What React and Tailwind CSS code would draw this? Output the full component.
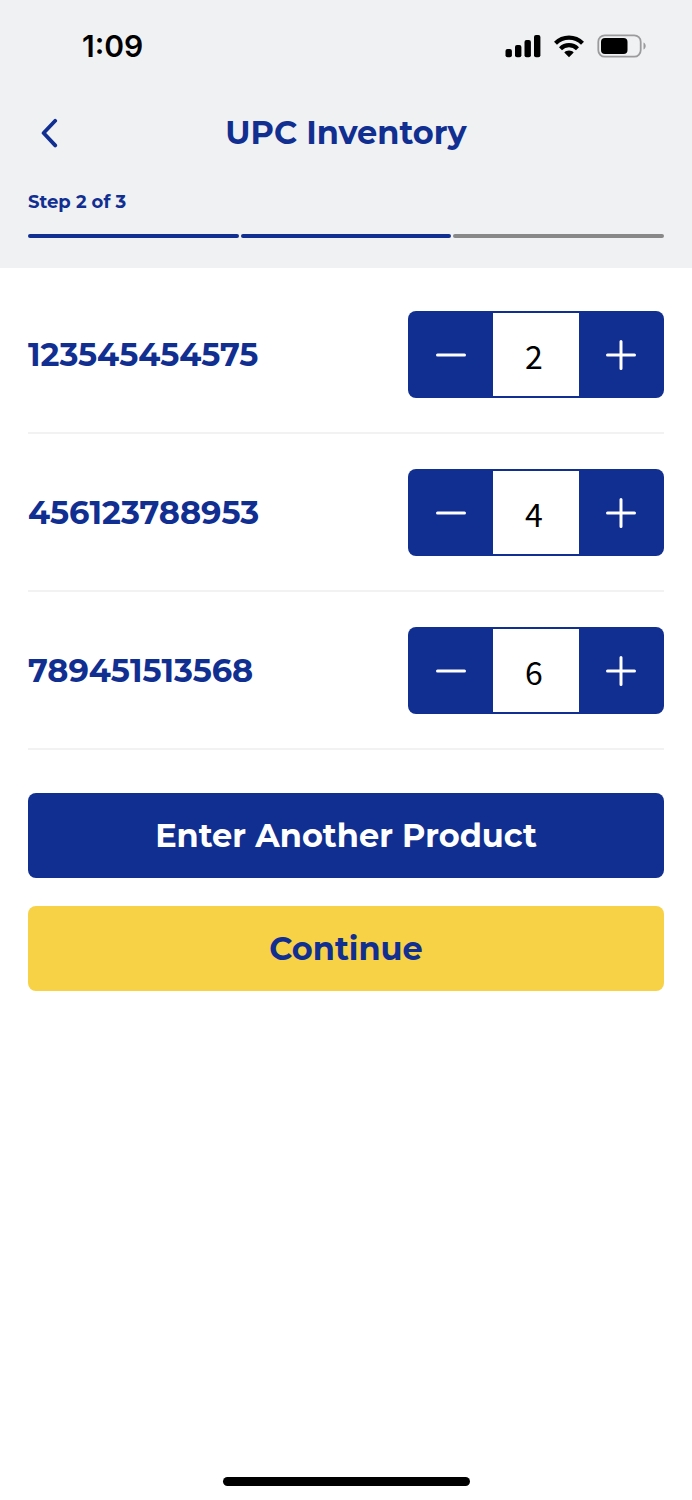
// src/App.jsx
import { useState } from "react";

const PRODUCTS = [
  { upc: "123545454575", qty: 2 },
  { upc: "456123788953", qty: 4 },
  { upc: "789451513568", qty: 6 },
];

export default function App() {
  const [products, setProducts] = useState(PRODUCTS);

  const setQty = (upc, qty) =>
    setProducts((list) => list.map((p) => (p.upc === upc ? { ...p, qty: Math.max(0, qty) } : p)));

  return (
    <div className="flex min-h-screen flex-col bg-white font-['Montserrat','Inter',sans-serif] text-[#112f91]">
      <header className="bg-[#f0f1f3] px-7 pb-[30px]">
        <StatusBar />

        <div className="grid h-[82px] grid-cols-[44px_1fr_44px] items-center">
          <button type="button" aria-label="Back" className="flex h-11 w-11 items-center justify-center">
            <svg viewBox="0 0 18 30" className="h-[30px] w-[18px]" fill="none" stroke="currentColor" strokeWidth="3.8" strokeLinecap="round" strokeLinejoin="round">
              <path d="M14.2 2.800 2.600 15l11.600 12.400" />
            </svg>
          </button>
          <h1 className="text-center text-[32px] leading-10 font-bold">UPC Inventory</h1>
        </div>

        <p className="mt-4 text-lg leading-6 font-bold">Step 2 of 3</p>
        <div className="mt-5 grid grid-cols-3 gap-0.5">
          <span className="h-1 rounded-full bg-[#112f91]" />
          <span className="h-1 rounded-full bg-[#112f91]" />
          <span className="h-1 rounded-full bg-[#888888]" />
        </div>
      </header>

      <main className="flex-1 px-7 pt-2">
        <ul>
          {products.map((p) => (
            <ProductRow key={p.upc} upc={p.upc} qty={p.qty} onChange={(qty) => setQty(p.upc, qty)} />
          ))}
        </ul>

        <div className="mt-[43px] flex flex-col gap-7">
          <button type="button" className="h-[85px] rounded-lg bg-[#112f91] text-[32px] leading-10 font-bold text-white">
            Enter Another Product
          </button>
          <button type="button" className="h-[85px] rounded-lg bg-[#f7d247] text-[32px] leading-10 font-bold">
            Continue
          </button>
        </div>
      </main>

      <footer className="flex justify-center pb-3.5">
        <span className="h-[9px] w-[247px] rounded-full bg-black" />
      </footer>
    </div>
  );
}

function ProductRow({ upc, qty, onChange }) {
  return (
    <li className="flex items-center justify-between border-b-2 border-[#f2f2f2] pt-[35px] pb-[34px]">
      <label htmlFor={upc} className="text-[32px] leading-10 font-bold">
        {upc}
      </label>
      <div className="grid h-[87px] w-64 grid-cols-3 overflow-hidden rounded-lg bg-[#112f91] text-white">
        <button type="button" aria-label="Decrease" onClick={() => onChange(qty - 1)} className="flex items-center justify-center">
          <StepIcon d="M1.5 15h27" />
        </button>
        <input
          id={upc}
          type="text"
          inputMode="numeric"
          value={qty}
          onChange={(e) => onChange(Number(e.target.value) || 0)}
          className="my-0.5 w-full min-w-0 bg-white pr-1 text-center font-['Noto_Sans_CJK_JP',sans-serif] text-[32px] text-black"
        />
        <button type="button" aria-label="Increase" onClick={() => onChange(qty + 1)} className="flex items-center justify-center">
          <StepIcon d="M1.5 15h27M15 1.5v27" />
        </button>
      </div>
    </li>
  );
}

function StepIcon({ d }) {
  return (
    <svg viewBox="0 0 30 30" className="h-[30px] w-[30px]" fill="none" stroke="currentColor" strokeWidth="3" strokeLinecap="round">
      <path d={d} />
    </svg>
  );
}

function StatusBar() {
  return (
    <div className="flex h-[92px] items-center justify-between pr-[17px] pl-[54px] text-black">
      <span className="font-['Inter',sans-serif] text-[30px] leading-9 font-semibold">1:09</span>
      <div className="flex items-center gap-3">
        <svg viewBox="0 0 36 24" className="h-6 w-9" fill="currentColor">
          <rect x="0.5" y="15" width="6.4" height="8.2" rx="2" />
          <rect x="10" y="11" width="6.4" height="12.2" rx="2" />
          <rect x="19.500" y="6" width="6.4" height="17.2" rx="2" />
          <rect x="29" y="1" width="6.4" height="22.2" rx="2" />
        </svg>
        <svg viewBox="0 0 32 24" className="h-6 w-8" fill="none" stroke="currentColor" strokeWidth="4.2">
          <path d="M2.5 9.2a19.3 19.3 0 0 1 27 0" />
          <path d="M7.5 14.7a12 12 0 0 1 17 0" />
          <path d="M16 16.5c1.9 0 3.5.7 4.7 1.9L16 23.2l-4.7-4.8c1.2-1.2 2.8-1.9 4.7-1.9z" fill="currentColor" stroke="none" />
        </svg>
        <svg viewBox="0 0 50 24" className="h-6 w-[50px]" fill="none">
          <rect x="1.3" y="1.3" width="42.4" height="21.4" rx="6.5" stroke="#9b9b9d" strokeWidth="1.8" />
          <rect x="4" y="4" width="26.5" height="16" rx="4" fill="#000" />
          <path d="M46.5 8.5v7c1.4-.6 2.2-2 2.2-3.5s-.8-2.9-2.2-3.5z" fill="#9b9b9d" />
        </svg>
      </div>
    </div>
  );
}
